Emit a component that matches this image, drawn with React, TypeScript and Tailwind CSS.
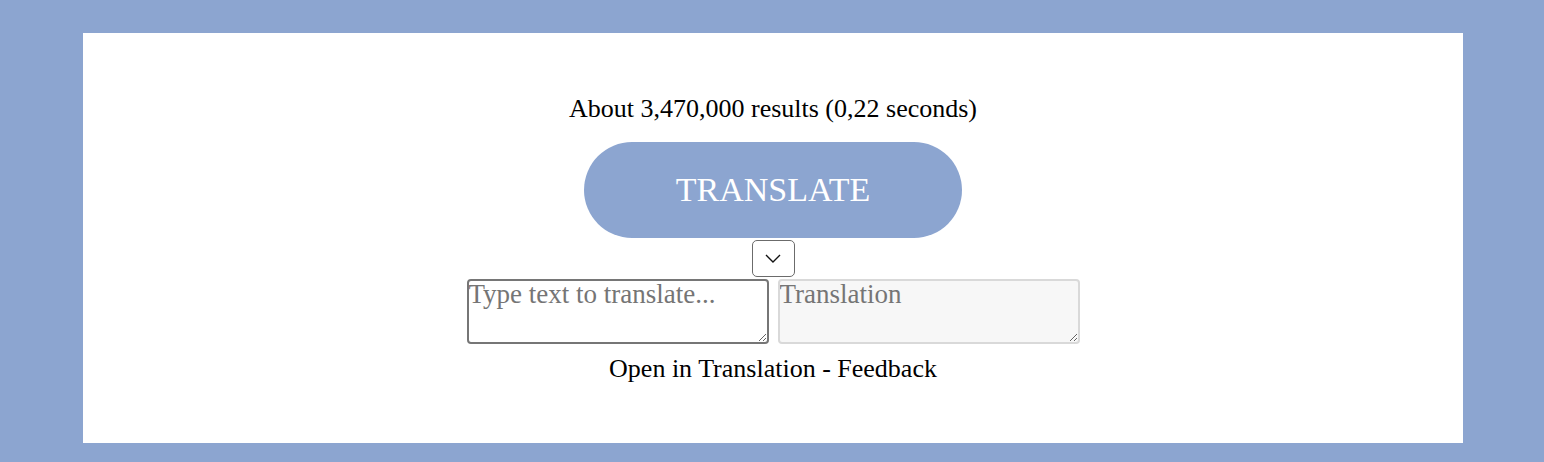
import { useState } from 'react';

const App = () => {
  const [text, setText] = useState('');
  return (
    <div className="min-h-[462px] bg-[#8ca5d0] pt-[33px] pl-[83px] pr-[81px] pb-[19px]">
      <div className="h-[410px] bg-white flex flex-col items-center pt-[61px] font-['Liberation_Serif',serif] text-black">
        <p className="text-[26px] leading-[30px]">About 3,470,000 results (0,22 seconds)</p>

        <button className="mt-[18px] w-[378px] h-[96px] rounded-full bg-[#8ca5d0] text-white text-[34px] leading-none">
          TRANSLATE
        </button>

        {/* language select */}
        <button className="mt-[2px] w-[43px] h-[37px] rounded-[5px] border border-[#6b6b6b] bg-white flex items-center justify-center">
          <svg width="16" height="9" viewBox="0 0 16 9" fill="none">
            <path d="M1 1l7 7 7-7" stroke="#111" strokeWidth="1.4" />
          </svg>
        </button>

        <div className="mt-[2px] flex gap-[9px]">
          <textarea
            value={text}
            onChange={(e) => setText(e.target.value)}
            placeholder="Type text to translate..."
            className="w-[302px] h-[65px] rounded-[4px] border-2 border-[#767676] bg-white p-0 text-[27px] leading-[27px] font-['Liberation_Serif',serif] placeholder:text-[#757575] resize"
          />
          <textarea
            readOnly
            placeholder="Translation"
            className="w-[302px] h-[65px] rounded-[4px] border-2 border-[#d9d9d9] bg-[#f7f7f7] p-0 text-[27px] leading-[27px] font-['Liberation_Serif',serif] placeholder:text-[#757575] resize"
          />
        </div>

        <p className="mt-[10px] text-[26px] leading-[30px]">Open in Translation - Feedback</p>
      </div>
    </div>
  );
};

export default App;
